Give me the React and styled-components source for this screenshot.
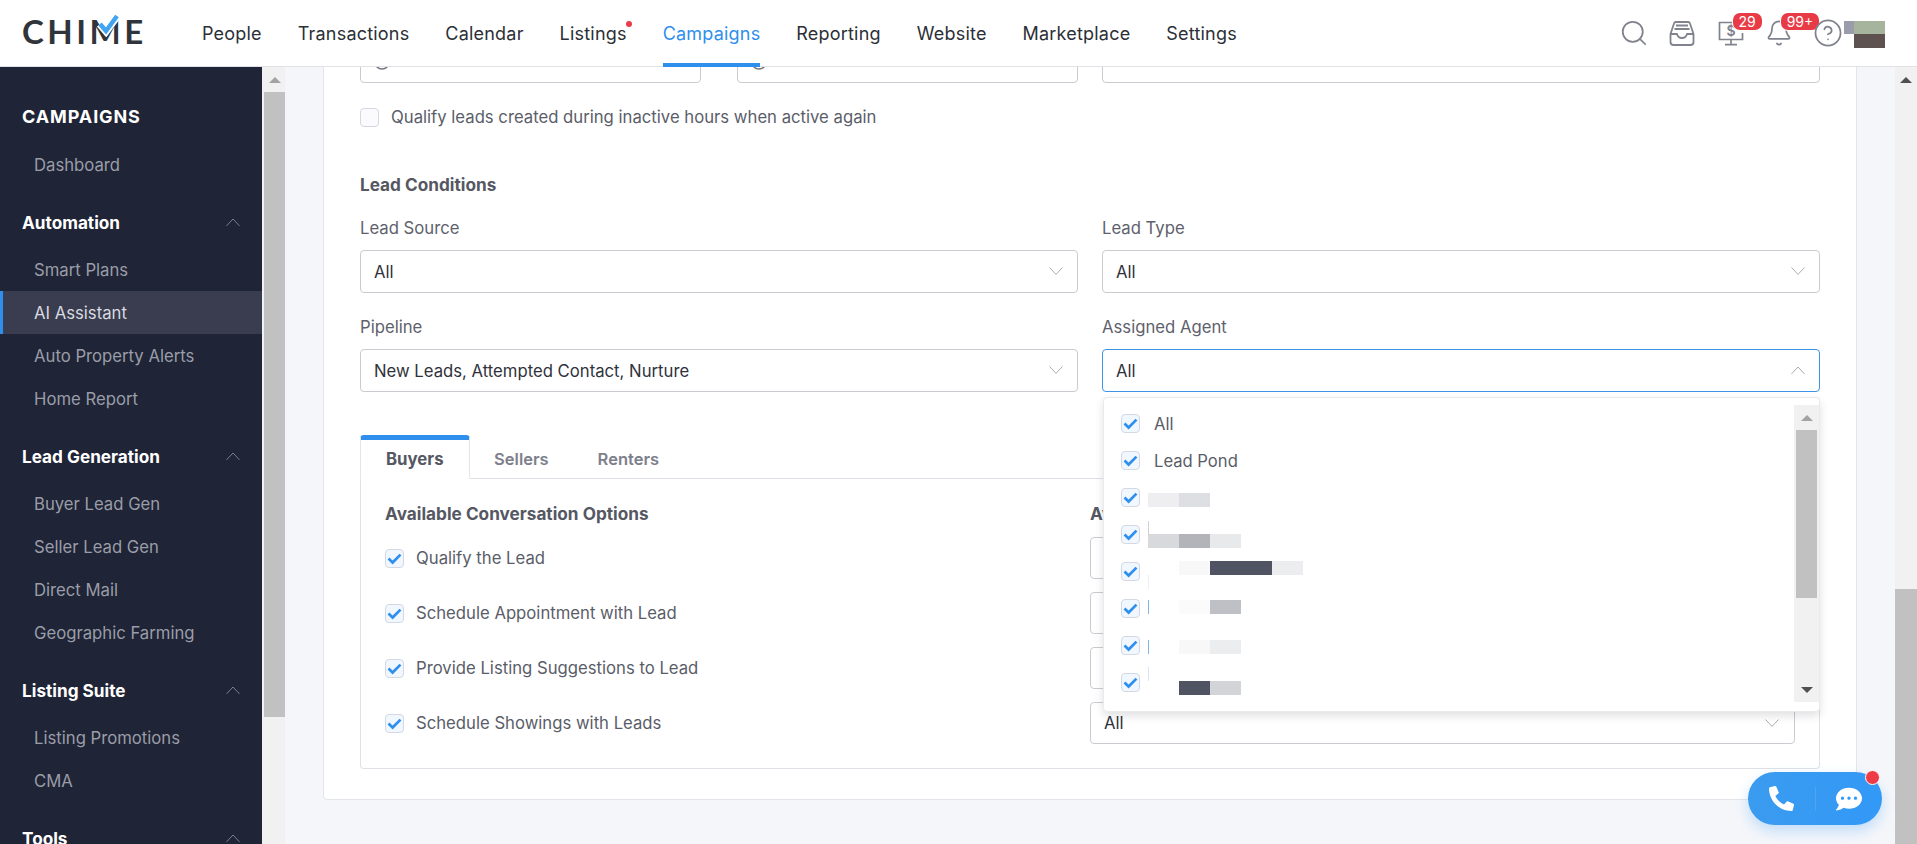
import React from "react";
import styled, { createGlobalStyle } from "styled-components";
import { Search, Bell, CircleHelp } from "lucide-react";
import { FaPhoneAlt, FaCommentDots } from "react-icons/fa";

const GlobalStyle = createGlobalStyle`
  html, body {
    margin: 0;
    height: 100%;
    overflow: hidden;
    background: #f5f6fa;
    font-family: Inter, "Noto Sans", sans-serif;
    font-size: 16.7px;
    color: #50535f;
  }
  * { box-sizing: border-box; }
`;

const Page = styled.div`
  height: 100vh;
  display: flex;
  flex-direction: column;
  overflow: hidden;
`;

/* top bar */
const TopBar = styled.header`
  height: 67px;
  flex: none;
  display: flex;
  align-items: stretch;
  background: #fff;
  border-bottom: 1px solid #e1e2e6;
  padding: 0 32px 0 22px;
  position: relative;
  z-index: 5;
`;

const Logo = styled.div`
  position: relative;
  width: 122px;
  align-self: center;
  font-family: Lato, sans-serif;
  font-weight: 700;
  font-size: 33px;
  line-height: 33px;
  letter-spacing: 3.5px;
  color: #30343b;
  margin-top: -3px;
  white-space: nowrap;
`;

const LogoCheck = styled.svg`
  position: absolute;
  left: 74px;
  top: -2px;
`;

const MainNav = styled.nav`
  display: flex;
  gap: 36px;
  margin-left: 58px;
`;

const NavItem = styled.a`
  position: relative;
  display: flex;
  align-items: center;
  font-size: 18px;
  letter-spacing: 0.2px;
  color: ${(p) => (p.$active ? "#2f8fec" : "#2c2f36")};

  &::after {
    content: "";
    display: ${(p) => (p.$active ? "block" : "none")};
    position: absolute;
    left: 0;
    right: 0;
    bottom: -1px;
    height: 4px;
    background: #2f8fec;
  }
`;

const NavDot = styled.span`
  position: absolute;
  right: -5px;
  top: 21px;
  width: 6px;
  height: 6px;
  border-radius: 50%;
  background: #ec3b48;
`;

const Tools = styled.div`
  margin-left: auto;
  display: flex;
  align-items: center;
  gap: 22.5px;
`;

const ToolSlot = styled.div`
  position: relative;
  width: 26px;
  height: 26px;
  color: #80838d;
  display: flex;
  align-items: center;
  justify-content: center;

  svg {
    flex: none;
  }
`;

const Badge = styled.span`
  position: absolute;
  left: 15px;
  top: -7px;
  height: 17px;
  min-width: ${(p) => p.$width}px;
  padding: 0 3px;
  border-radius: 7px;
  background: #e93b46;
  color: #fff;
  font-size: 14px;
  line-height: 17px;
  text-align: center;
  box-shadow: 0 0 0 1px #fff;
`;

const Avatar = styled.div`
  display: grid;
  grid-template-columns: 10px 31px;
  grid-template-rows: 13px 14px;
  margin: 2px 0 0 -19px;
  z-index: 1;
`;

const AvatarPixel = styled.span`
  background: ${(p) => p.$color};
`;

/* under the top bar */
const Body = styled.div`
  flex: 1;
  min-height: 0;
  display: flex;
`;

const Sidebar = styled.aside`
  width: 262px;
  flex: none;
  background: #1f2436;
  overflow: hidden;
  padding-top: 40px;
`;

const SideTitle = styled.div`
  padding-left: 22px;
  font-size: 18px;
  line-height: 20px;
  font-weight: 700;
  letter-spacing: 0.9px;
  color: #fff;
  margin-bottom: 16px;
`;

const SideGroup = styled.div`
  display: flex;
  justify-content: space-between;
  align-items: center;
  height: 34px;
  margin: 20px 0 8px;
  padding: 0 22px 1px;
  font-weight: 700;
  font-size: 17.2px;
  color: #fff;
`;

const SideLink = styled.a`
  display: flex;
  align-items: center;
  height: 43px;
  padding-left: ${(p) => (p.$active ? "31px" : "34px")};
  font-size: 16.7px;
  color: ${(p) => (p.$active ? "#d9dae0" : "#9a9da8")};
  background: ${(p) => (p.$active ? "#393d4f" : "transparent")};
  border-left: ${(p) => (p.$active ? "3px solid #2f8fec" : "0")};
`;

/* fake browser scrollbars */
const Track = styled.div`
  width: ${(p) => p.$width}px;
  flex: none;
  display: flex;
  flex-direction: column;
  background: #f1f1f1;
  padding-left: ${(p) => p.$left || 0}px;
  padding-right: ${(p) => p.$right || 0}px;
`;

const ArrowSlot = styled.div`
  height: 25px;
  flex: none;
  display: flex;
  align-items: center;
  justify-content: center;
`;

const Arrow = styled.span`
  width: 0;
  height: 0;
  border-left: 6px solid transparent;
  border-right: 6px solid transparent;
  border-bottom: ${(p) => (p.$down ? "0" : `6px solid ${p.$color}`)};
  border-top: ${(p) => (p.$down ? `6px solid ${p.$color}` : "0")};
`;

const Thumb = styled.div`
  background: #c1c1c1;
  flex: ${(p) => (p.$height ? "none" : "1")};
  height: ${(p) => (p.$height ? `${p.$height}px` : "auto")};
  margin-top: ${(p) => p.$offset || 0}px;
`;

const Spacer = styled.div`
  flex: 1;
`;

const Main = styled.main`
  flex: 1;
  min-width: 0;
  overflow: hidden;
  padding: 0 38px;
  background: #f5f6fa;
`;

const Card = styled.section`
  margin-top: -28px;
  background: #fff;
  border: 1px solid #e3e5ea;
  border-radius: 4px;
  padding: 0 36px 30px;
`;

const Columns = styled.div`
  display: grid;
  grid-template-columns: 718px 718px;
  gap: 24px;
  margin-top: ${(p) => p.$top || 0}px;
`;

const Pair = styled.div`
  display: flex;
  gap: 36px;
`;

const Field = styled.div`
  position: relative;
  flex: 1;
`;

const Box = styled.div`
  height: 43px;
  display: flex;
  align-items: center;
  justify-content: space-between;
  padding: 0 14px 0 13px;
  border: 1px solid ${(p) => (p.$focus ? "#3d93e5" : "#c9cbd0")};
  border-radius: 4px;
  background: #fff;
  color: #2f323b;
`;

const ClockFace = styled.svg`
  display: block;
  margin-top: 1px;
`;

const CheckLine = styled.label`
  display: flex;
  align-items: center;
  gap: 12px;
  line-height: 19px;
  margin-top: ${(p) => p.$top || 0}px;
  color: #5a5d69;
`;

const Tick = styled.span`
  width: 19px;
  height: 19px;
  flex: none;
  border: 1px solid #d3d8e2;
  border-radius: 4px;
  background: ${(p) => (p.$on ? "#f1f7ff" : "#fbfbfd")};
  display: flex;
  align-items: center;
  justify-content: center;
`;

const SectionTitle = styled.h3`
  margin: ${(p) => p.$top || 0}px 0 0;
  font-size: 17.2px;
  line-height: 20px;
  font-weight: 700;
  color: #555863;
`;

const Label = styled.div`
  line-height: 20px;
  color: #5e616c;
  margin-bottom: 12px;
`;

/* tabs */
const TabBar = styled.div`
  display: flex;
  align-items: stretch;
  height: 44px;
  margin-top: 43px;
  border-bottom: 1px solid #dfe1e6;
`;

const Tab = styled.a`
  display: flex;
  align-items: center;
  padding: ${(p) => (p.$active ? "0 25px" : "4px 24.5px 0")};
  font-weight: ${(p) => (p.$active ? 700 : 600)};
  font-size: ${(p) => (p.$active ? "16.8px" : "16.5px")};
  color: ${(p) => (p.$active ? "#555863" : "#7d808b")};
  ${(p) =>
    p.$active &&
    `
    border: 1px solid #e3e5ea;
    border-top: 5px solid #2f8fec;
    border-bottom: 1px solid #fff;
    border-radius: 4px 4px 0 0;
    margin-bottom: -1px;
  `}
`;

const TabPanel = styled.div`
  border: 1px solid #dfe1e6;
  border-top: 0;
  border-radius: 0 0 4px 4px;
  padding: 25px 24px 24px 24px;
`;

const OptionGrid = styled.div`
  display: grid;
  grid-template-columns: 705px 705px;
  row-gap: 13px;
  align-items: center;
`;

const HeadRow = styled(OptionGrid)`
  margin-bottom: 13px;
`;

const OptionBox = styled(Box)`
  height: 42px;
  padding-right: 15px;
`;

/* open multi select */
const Dropdown = styled.div`
  position: absolute;
  left: 1px;
  right: 0;
  top: calc(100% + 5px);
  height: 315px;
  display: flex;
  background: #fff;
  border: 1px solid #e8eaee;
  border-radius: 4px;
  padding: 7px 0 9px;
  box-shadow: 0 4px 8px rgba(40, 44, 60, 0.14);
  z-index: 3;
`;

const OptionList = styled.div`
  flex: 1;
  padding-left: 17px;
`;

const OptionRow = styled.div`
  height: 37px;
  display: flex;
  align-items: center;
  gap: 14px;
  font-size: 16.6px;
  color: #5a5d69;
`;

const Redacted = styled.div`
  position: relative;
  display: flex;
  height: 14px;
  margin-left: -6px;
  margin-top: ${(p) => p.$shift}px;
`;

const RedactPixel = styled.span`
  width: 31px;
  background: ${(p) => p.$shade};
`;

const Sliver = styled.span`
  position: absolute;
  left: 0;
  top: ${(p) => p.$top}px;
  width: 1px;
  height: 14px;
  background: ${(p) => p.$color};
`;

/* floating call widget */
const CallWidget = styled.div`
  position: fixed;
  right: 35px;
  bottom: 19px;
  width: 134px;
  height: 53px;
  border-radius: 27px;
  background: linear-gradient(90deg, #3a9bef, #3399f7);
  box-shadow: 0 6px 14px rgba(51, 153, 247, 0.28);
  display: flex;
  align-items: center;
  color: #fff;
  z-index: 6;
`;

const CallPart = styled.div`
  width: 50%;
  height: 24px;
  display: flex;
  align-items: center;
  justify-content: center;
  border-left: ${(p) => (p.$split ? "1px solid #4ea4f0" : "0")};
`;

const CallDot = styled.span`
  position: absolute;
  right: 2px;
  top: -2px;
  width: 15px;
  height: 15px;
  border-radius: 50%;
  background: #ee3b46;
  border: 1px solid #fff;
`;

const Chevron = ({ up, color = "#a9acb3", size = 14 }) => (
  <svg width={size} height={size * 0.6} viewBox="0 0 14 8.4" fill="none">
    <polyline
      points={up ? "0.5,7.9 7,1 13.5,7.9" : "0.5,0.5 7,7.4 13.5,0.5"}
      stroke={color}
      strokeWidth="1"
    />
  </svg>
);

const CheckMark = ({ size = 15 }) => (
  <svg width={size} height={size} viewBox="0 0 15 15" fill="none">
    <polyline points="1.5,7.5 5.6,11.5 13.5,3.6" stroke="#2f8fec" strokeWidth="2.7" />
  </svg>
);

const Select = ({ value, focus, up }) => (
  <Box $focus={focus}>
    <span>{value}</span>
    <Chevron up={up} />
  </Box>
);

const InboxIcon = () => (
  <svg width="26" height="25" viewBox="0 0 26 25" fill="none" stroke="#80838d" strokeWidth="1.8" strokeLinejoin="round">
    <path d="M1.5 13 L5 2.5 Q5.3 1 7 1 H19 Q20.7 1 21 2.5 L24.5 13 V21 Q24.5 24 21.5 24 H4.5 Q1.5 24 1.5 21 Z" />
    <path d="M1.5 13 H8 Q9 17 13 17 Q17 17 18 13 H24.5" />
    <path d="M5.5 8 H20.5 M7 4.5 H19" />
  </svg>
);

const MonitorIcon = () => (
  <svg width="26" height="25" viewBox="0 0 26 25" fill="none" stroke="#80838d" strokeWidth="1.7">
    <path d="M24.5 12 V18.5 H1.5 V1.5 H15" />
    <path d="M13 18.5 V23.5 M7 23.6 H19" />
    <text x="13" y="15" textAnchor="middle" fontSize="14" fontWeight="600" fontFamily="Inter, sans-serif" fill="#80838d" stroke="none">$</text>
  </svg>
);

const sideSections = [
  { title: "Automation", links: ["Smart Plans", "AI Assistant", "Auto Property Alerts", "Home Report"] },
  { title: "Lead Generation", links: ["Buyer Lead Gen", "Seller Lead Gen", "Direct Mail", "Geographic Farming"] },
  { title: "Listing Suite", links: ["Listing Promotions", "CMA"] },
  { title: "Tools", links: [] },
];

const navItems = ["People", "Transactions", "Calendar", "Listings", "Campaigns", "Reporting", "Website", "Marketplace", "Settings"];

const conversationOptions = [
  "Qualify the Lead",
  "Schedule Appointment with Lead",
  "Provide Listing Suggestions to Lead",
  "Schedule Showings with Leads",
];

const agentRows = [
  { shift: 5, shades: ["#eeeef1", "#dedfe2"] },
  { shift: 12, shades: ["#d8d9dc", "#b3b4ba", "#e8e9eb"], line: { top: -13, color: "#d0d1d6" } },
  { shift: -8, shades: ["transparent", "#f8f8f9", "#4f5362", "#4f5362", "#ecedef"], line: { top: 14, color: "#eceef2" } },
  { shift: -3, shades: ["transparent", "#fbfbfc", "#bfc0c5"], line: { top: 0, color: "#7fb4e8" } },
  { shift: 2, shades: ["transparent", "#f8f8f9", "#ecedef"], line: { top: 0, color: "#7fb4e8" } },
  { shift: 10, shades: ["transparent", "#4f5362", "#d3d4d8"], line: { top: -14, color: "#d8e4f2" } },
];

export default function App() {
  return (
    <Page>
      <GlobalStyle />
      <TopBar>
        <Logo>
          CHIME
          <LogoCheck width="24" height="24" viewBox="0 0 24 24" fill="none">
            <polyline points="4,11 10,18 21,3" stroke="#fff" strokeWidth="8" />
            <polyline points="4,11 10,18 21,3" stroke="#3fa4f2" strokeWidth="4.5" />
          </LogoCheck>
        </Logo>
        <MainNav>
          {navItems.map((item) => (
            <NavItem key={item} $active={item === "Campaigns"}>
              {item}
              {item === "Listings" && <NavDot />}
            </NavItem>
          ))}
        </MainNav>
        <Tools>
          <ToolSlot>
            <Search size={30} strokeWidth={1.4} />
          </ToolSlot>
          <ToolSlot>
            <InboxIcon />
          </ToolSlot>
          <ToolSlot>
            <MonitorIcon />
            <Badge $width={29}>29</Badge>
          </ToolSlot>
          <ToolSlot>
            <Bell size={28} strokeWidth={1.5} />
            <Badge $width={38}>99+</Badge>
          </ToolSlot>
          <ToolSlot>
            <CircleHelp size={30} strokeWidth={1.4} />
          </ToolSlot>
          <Avatar>
            <AvatarPixel $color="#9a9da9" />
            <AvatarPixel $color="#a6b39d" />
            <span />
            <AvatarPixel $color="#5d5250" />
          </Avatar>
        </Tools>
      </TopBar>

      <Body>
        <Sidebar>
          <SideTitle>CAMPAIGNS</SideTitle>
          <SideLink>Dashboard</SideLink>
          {sideSections.map((section) => (
            <div key={section.title}>
              <SideGroup>
                {section.title}
                <Chevron up color="#7b7f8c" />
              </SideGroup>
              {section.links.map((link) => (
                <SideLink key={link} $active={link === "AI Assistant"}>
                  {link}
                </SideLink>
              ))}
            </div>
          ))}
        </Sidebar>
        <Track $width={23} $left={2}>
          <ArrowSlot>
            <Arrow $color="#a3a3a3" />
          </ArrowSlot>
          <Thumb $height={625} />
        </Track>

        <Main>
          <Card>
            <Columns>
              <Pair>
                <Field>
                  <Box>
                    <ClockFace width="16" height="16" viewBox="0 0 16 16" fill="none">
                      <circle cx="8" cy="8" r="7" stroke="#70737d" strokeWidth="1.5" />
                    </ClockFace>
                  </Box>
                </Field>
                <Field>
                  <Box>
                    <ClockFace width="16" height="16" viewBox="0 0 16 16" fill="none">
                      <circle cx="8" cy="8" r="7" stroke="#70737d" strokeWidth="1.5" />
                    </ClockFace>
                  </Box>
                </Field>
              </Pair>
              <Field>
                <Box />
              </Field>
            </Columns>

            <CheckLine $top={25}>
              <Tick />
              Qualify leads created during inactive hours when active again
            </CheckLine>

            <SectionTitle $top={48}>Lead Conditions</SectionTitle>

            <Columns $top={23}>
              <Field>
                <Label>Lead Source</Label>
                <Select value="All" />
              </Field>
              <Field>
                <Label>Lead Type</Label>
                <Select value="All" />
              </Field>
            </Columns>

            <Columns $top={24}>
              <Field>
                <Label>Pipeline</Label>
                <Select value="New Leads, Attempted Contact, Nurture" />
              </Field>
              <Field>
                <Label>Assigned Agent</Label>
                <Select value="All" focus up />
                <Dropdown>
                  <OptionList>
                    <OptionRow>
                      <Tick $on><CheckMark /></Tick>
                      All
                    </OptionRow>
                    <OptionRow>
                      <Tick $on><CheckMark /></Tick>
                      Lead Pond
                    </OptionRow>
                    {agentRows.map((row, i) => (
                      <OptionRow key={i}>
                        <Tick $on><CheckMark /></Tick>
                        <Redacted $shift={row.shift}>
                          {row.line && <Sliver $top={row.line.top} $color={row.line.color} />}
                          {row.shades.map((shade, j) => (
                            <RedactPixel key={j} $shade={shade} />
                          ))}
                        </Redacted>
                      </OptionRow>
                    ))}
                  </OptionList>
                  <Track $width={25} $left={2} $right={2}>
                    <ArrowSlot>
                      <Arrow $color="#a3a3a3" />
                    </ArrowSlot>
                    <Thumb $height={168} />
                    <Spacer />
                    <ArrowSlot>
                      <Arrow $down $color="#505050" />
                    </ArrowSlot>
                  </Track>
                </Dropdown>
              </Field>
            </Columns>

            <TabBar>
              <Tab $active>Buyers</Tab>
              <Tab>Sellers</Tab>
              <Tab>Renters</Tab>
            </TabBar>
            <TabPanel>
              <HeadRow>
                <SectionTitle>Available Conversation Options</SectionTitle>
                <SectionTitle>Available Agents</SectionTitle>
              </HeadRow>
              <OptionGrid>
                {conversationOptions.map((option) => (
                  <React.Fragment key={option}>
                    <CheckLine>
                      <Tick $on><CheckMark /></Tick>
                      {option}
                    </CheckLine>
                    <OptionBox>
                      <span>All</span>
                      <Chevron />
                    </OptionBox>
                  </React.Fragment>
                ))}
              </OptionGrid>
            </TabPanel>
          </Card>
        </Main>

        <Track $width={22}>
          <ArrowSlot>
            <Arrow $color="#505050" />
          </ArrowSlot>
          <Thumb $offset={497} />
        </Track>
      </Body>

      <CallWidget>
        <CallPart><FaPhoneAlt size={25} /></CallPart>
        <CallPart $split><FaCommentDots size={26} /></CallPart>
        <CallDot />
      </CallWidget>
    </Page>
  );
}
